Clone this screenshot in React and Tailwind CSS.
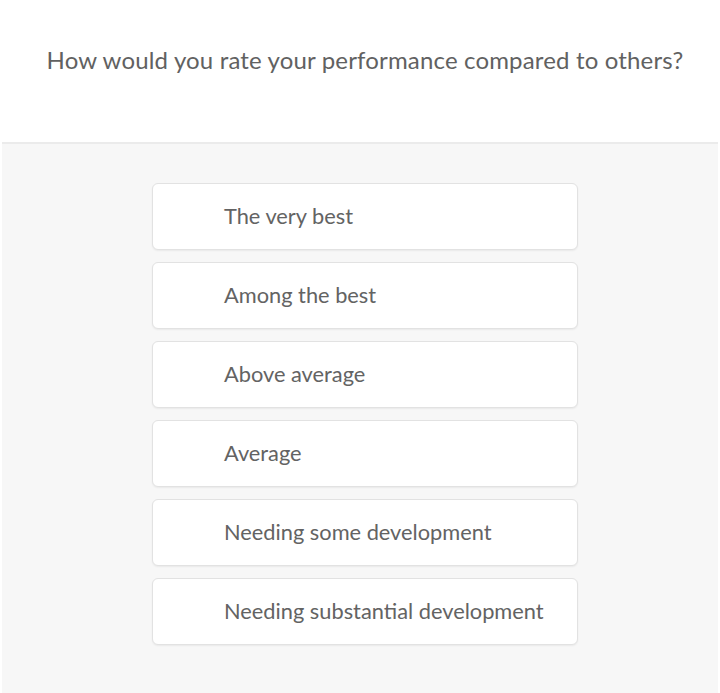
import React from "react";

const options = [
  "The very best",
  "Among the best",
  "Above average",
  "Average",
  "Needing some development",
  "Needing substantial development",
];

export default function App() {
  return (
    <div className="w-[720px] h-[693px] bg-white flex flex-col" style={{ fontFamily: "Lato, 'Open Sans', sans-serif" }}>
      <div className="h-[142px] flex justify-center pt-[45px] pl-[10px]">
        <h1 className="text-[24px] leading-[30px] text-[#616161] font-normal tracking-[0.16px]">
          How would you rate your performance compared to others?
        </h1>
      </div>
      <div className="flex-1 mx-[2px] bg-[#f7f7f7] border-t-2 border-[#ebebeb] flex flex-col items-center pt-[39px] pl-[10px] gap-[12px]">
        {options.map((o) => (
          <div
            key={o}
            className="w-[426px] h-[67px] bg-white border border-[#e2e2e2] rounded-[6px] shadow-[0_1px_2px_rgba(0,0,0,0.06)] flex items-center pl-[71px] pb-[1px]"
          >
            <span className="text-[21.8px] text-[#636363]">{o}</span>
          </div>
        ))}
      </div>
    </div>
  );
}
